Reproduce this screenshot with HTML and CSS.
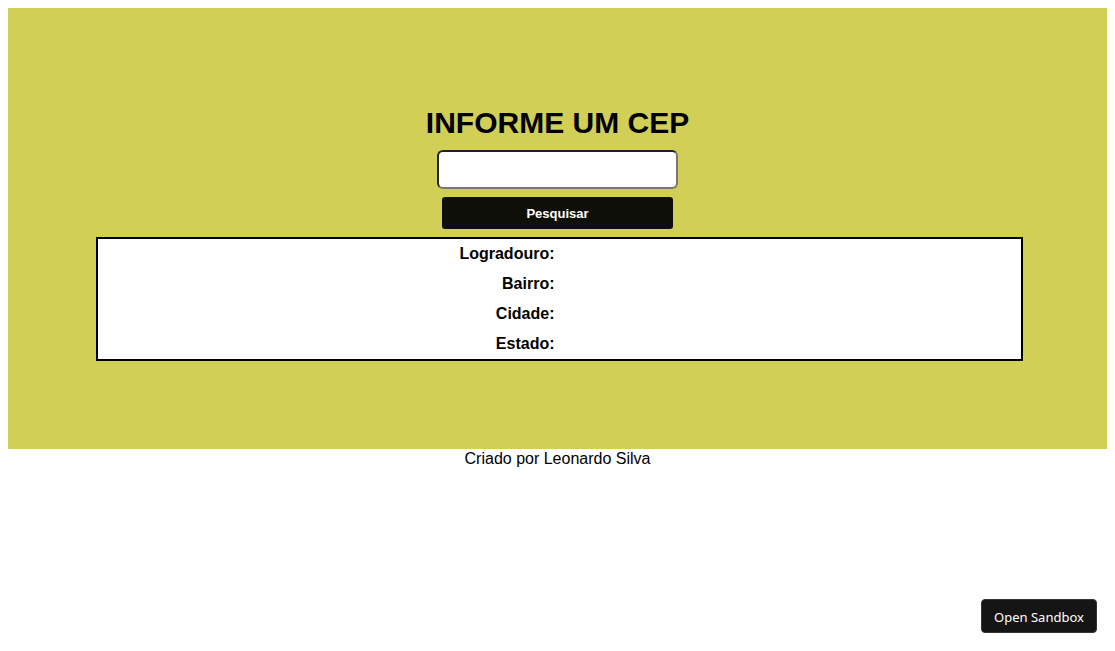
FILE: index.html
```
<!DOCTYPE html>
<html lang="pt-BR">
<head>
<meta charset="utf-8">
<title>Informe um CEP</title>
<link rel="stylesheet" href="styles.css">
</head>
<body>
<main class="search-panel">
<h1 class="title"><label for="cep">INFORME UM CEP</label></h1>
<input class="cep-input" id="cep" type="text">
<button class="search-button" type="button">Pesquisar</button>
<table class="result">
<tbody>
<tr><th scope="row">Logradouro:</th><td></td></tr>
<tr><th scope="row">Bairro:</th><td></td></tr>
<tr><th scope="row">Cidade:</th><td></td></tr>
<tr><th scope="row">Estado:</th><td></td></tr>
</tbody>
</table>
</main>
<footer class="credit">Criado por Leonardo Silva</footer>
<button class="sandbox-button" type="button">Open Sandbox</button>
</body>
</html>
```
FILE: styles.css
```
body {
  margin: 8px;
  background: #fff;
  color: #000;
  font-family: "Liberation Sans", Arial, sans-serif;
  font-size: 16px;
}

.search-panel {
  display: flex;
  flex-direction: column;
  align-items: center;
  padding: 96px 8% 88px;
  background: #d1cf56;
}

.title {
  margin: 0 0 8px;
  font-size: 30px;
  line-height: 38px;
}

.cep-input {
  box-sizing: border-box;
  width: 241px;
  height: 39px;
  margin-bottom: 8px;
  padding: 4px 8px;
  border: 2px inset #767676;
  border-radius: 6px;
  background: #fff;
  font: inherit;
}

.search-button {
  width: 231px;
  height: 32px;
  margin-bottom: 8px;
  border: 0;
  border-radius: 3px;
  background: #0f0f0a;
  color: #fff;
  font: bold 13px "Liberation Sans", Arial, sans-serif;
}

.result {
  box-sizing: content-box;
  align-self: flex-start;
  width: 100%;
  border: 2px solid #000;
  border-collapse: separate;
  border-spacing: 0;
  table-layout: fixed;
  background: #fff;
}

.result th,
.result td {
  height: 30px;
  padding: 0;
}

.result th {
  padding-right: 5px;
  text-align: right;
}

.credit {
  line-height: 20px;
  text-align: center;
}

.sandbox-button {
  position: fixed;
  right: 18px;
  bottom: 18px;
  width: 116px;
  height: 34px;
  padding: 2px 0 0;
  border: 1px solid #343434;
  border-radius: 4px;
  background: #151515;
  color: #fff;
  font: 13px "Noto Sans", sans-serif;
}
```
